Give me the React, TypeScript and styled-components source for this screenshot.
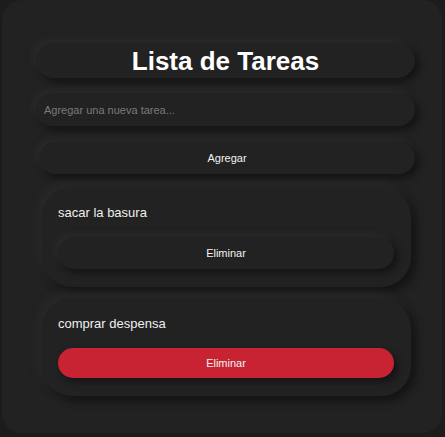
import React, { useState } from "react";
import styled, { createGlobalStyle } from "styled-components";

const GlobalStyle = createGlobalStyle`
  html, body {
    margin: 0;
    padding: 0;
    background: #1c1c1c;
    font-family: "Liberation Sans", Arial, sans-serif;
  }
`;

const Page = styled.div`
  padding: 0 3px 3px 2px;
`;

const Card = styled.div`
  box-sizing: border-box;
  width: 440px;
  padding: 43px 27px 37px 33px;
  background: #222222;
  border-radius: 20px;
  display: flex;
  flex-direction: column;
`;

const TitlePill = styled.h1`
  margin: 0 0 15px 1px;
  height: 35px;
  border-radius: 18px;
  background: #222222;
  box-shadow: 4px 4px 7px #141414, -3px -3px 6px #2b2b2b;
  color: #ffffff;
  font-size: 26px;
  font-weight: bold;
  display: flex;
  align-items: center;
  justify-content: center;
  padding-top: 1px;
  box-sizing: border-box;
`;

const Input = styled.input`
  box-sizing: border-box;
  height: 33px;
  margin: 0 0 16px 1px;
  border: none;
  outline: none;
  border-radius: 17px;
  background: #222222;
  box-shadow: 4px 4px 7px #141414, -3px -3px 6px #2b2b2b;
  padding: 0 8px;
  color: #dddddd;
  font-family: inherit;
  font-size: 11px;
  &::placeholder {
    color: #7a7a7a;
  }
`;

const Button = styled.button<{ $danger?: boolean }>`
  box-sizing: border-box;
  height: ${(p) => (p.$danger ? "30px" : "32px")};
  border: none;
  border-radius: 16px;
  background: ${(p) => (p.$danger ? "#c82333" : "#222222")};
  box-shadow: ${(p) =>
    p.$danger
      ? "4px 4px 7px #141414"
      : "4px 4px 7px #141414, -3px -3px 6px #2b2b2b"};
  color: #f2f2f2;
  font-family: inherit;
  font-size: 11px;
  cursor: pointer;
`;

const AddButton = styled(Button)`
  margin: 0 0 13px 4px;
`;

const TaskList = styled.div`
  display: flex;
  flex-direction: column;
  gap: 11px;
  padding: 0 4px 0 7px;
`;

const TaskCard = styled.div`
  border-radius: 30px;
  background: #222222;
  box-shadow: 5px 5px 9px #141414, -4px -4px 8px #2a2a2a;
  padding: 18px 17px 18px 16px;
  display: flex;
  flex-direction: column;
  gap: 16px;
`;

const TaskText = styled.span`
  color: #f0f0f0;
  font-size: 13px;
  line-height: 16px;
`;

export default function App() {
  const [tasks] = useState(["sacar la basura", "comprar despensa"]);
  return (
    <Page>
      <GlobalStyle />
      <Card>
        <TitlePill>Lista de Tareas</TitlePill>
        <Input placeholder="Agregar una nueva tarea..." />
        <AddButton>Agregar</AddButton>
        <TaskList>
          {tasks.map((t, i) => (
            <TaskCard key={t}>
              <TaskText>{t}</TaskText>
              <Button $danger={i === 1}>Eliminar</Button>
            </TaskCard>
          ))}
        </TaskList>
      </Card>
    </Page>
  );
}
